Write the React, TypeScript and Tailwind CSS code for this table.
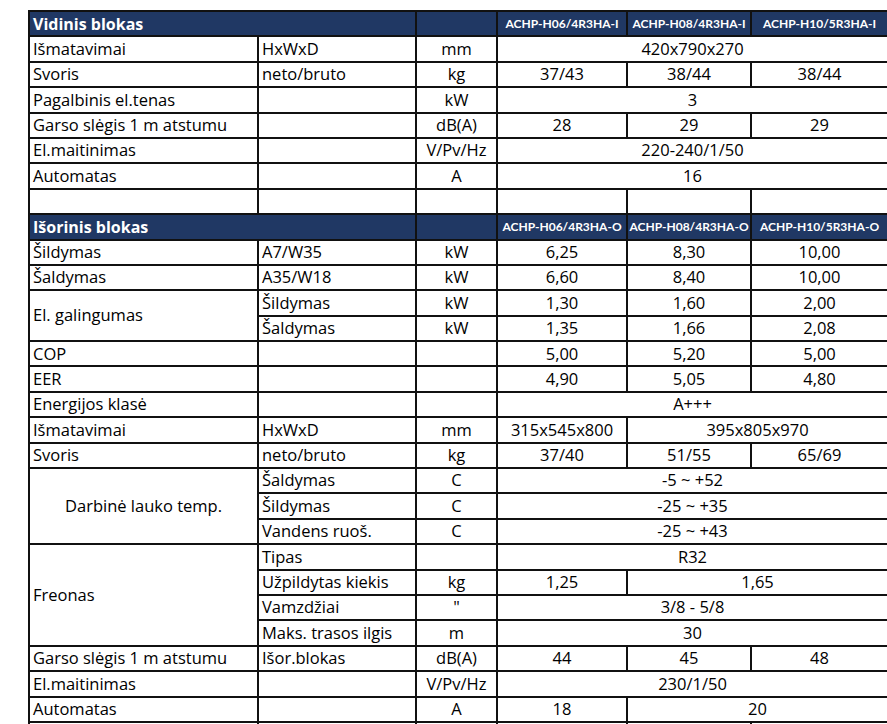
import React from "react";

const B = "border-2 border-[#111] p-0 align-middle whitespace-nowrap";
const L = `${B} pl-[3px] text-left`;
const C = `${B} text-center`;
const H = `${B} bg-[#203864] text-white font-bold`;
const M = `${H} text-center text-[12px] font-['Lato',sans-serif]`;

function Tr({ children }: { children: React.ReactNode }) {
  return <tr className="h-[25.4px]">{children}</tr>;
}

export default function App() {
  return (
    <div className="min-h-screen bg-white pt-[10px] pl-[28px] overflow-hidden">
      <table className="border-collapse table-fixed w-[859px] text-[16.5px] leading-none text-black font-['Open_Sans','Liberation_Sans',sans-serif]">
        <colgroup>
          <col className="w-[229px]" />
          <col className="w-[158px]" />
          <col className="w-[81px]" />
          <col className="w-[130px]" />
          <col className="w-[124px]" />
          <col className="w-[137px]" />
        </colgroup>
        <tbody>
          <Tr>
            <td colSpan={2} className={`${H} pl-[3px] text-left text-[16px]`}>Vidinis blokas</td>
            <td className={H}></td>
            <td className={M}>ACHP-H06/4R3HA-I</td>
            <td className={M}>ACHP-H08/4R3HA-I</td>
            <td className={M}>ACHP-H10/5R3HA-I</td>
          </Tr>
          <Tr>
            <td className={L}>Išmatavimai</td>
            <td className={L}>HxWxD</td>
            <td className={C}>mm</td>
            <td colSpan={3} className={C}>420x790x270</td>
          </Tr>
          <Tr>
            <td className={L}>Svoris</td>
            <td className={L}>neto/bruto</td>
            <td className={C}>kg</td>
            <td className={C}>37/43</td>
            <td className={C}>38/44</td>
            <td className={C}>38/44</td>
          </Tr>
          <Tr>
            <td className={L}>Pagalbinis el.tenas</td>
            <td className={L}></td>
            <td className={C}>kW</td>
            <td colSpan={3} className={C}>3</td>
          </Tr>
          <Tr>
            <td className={L}>Garso slėgis 1 m atstumu</td>
            <td className={L}></td>
            <td className={C}>dB(A)</td>
            <td className={C}>28</td>
            <td className={C}>29</td>
            <td className={C}>29</td>
          </Tr>
          <Tr>
            <td className={L}>El.maitinimas</td>
            <td className={L}></td>
            <td className={C}>V/Pv/Hz</td>
            <td colSpan={3} className={C}>220-240/1/50</td>
          </Tr>
          <Tr>
            <td className={L}>Automatas</td>
            <td className={L}></td>
            <td className={C}>A</td>
            <td colSpan={3} className={C}>16</td>
          </Tr>
          <Tr>
            <td className={L}></td>
            <td className={L}></td>
            <td className={C}></td>
            <td className={C}></td>
            <td className={C}></td>
            <td className={C}></td>
          </Tr>
          <Tr>
            <td colSpan={2} className={`${H} pl-[3px] text-left text-[16px]`}>Išorinis blokas</td>
            <td className={H}></td>
            <td className={M}>ACHP-H06/4R3HA-O</td>
            <td className={M}>ACHP-H08/4R3HA-O</td>
            <td className={M}>ACHP-H10/5R3HA-O</td>
          </Tr>
          <Tr>
            <td className={L}>Šildymas</td>
            <td className={L}>A7/W35</td>
            <td className={C}>kW</td>
            <td className={C}>6,25</td>
            <td className={C}>8,30</td>
            <td className={C}>10,00</td>
          </Tr>
          <Tr>
            <td className={L}>Šaldymas</td>
            <td className={L}>A35/W18</td>
            <td className={C}>kW</td>
            <td className={C}>6,60</td>
            <td className={C}>8,40</td>
            <td className={C}>10,00</td>
          </Tr>
          <Tr>
            <td rowSpan={2} className={L}>El. galingumas</td>
            <td className={L}>Šildymas</td>
            <td className={C}>kW</td>
            <td className={C}>1,30</td>
            <td className={C}>1,60</td>
            <td className={C}>2,00</td>
          </Tr>
          <Tr>
            <td className={L}>Šaldymas</td>
            <td className={C}>kW</td>
            <td className={C}>1,35</td>
            <td className={C}>1,66</td>
            <td className={C}>2,08</td>
          </Tr>
          <Tr>
            <td className={L}>COP</td>
            <td className={L}></td>
            <td className={C}></td>
            <td className={C}>5,00</td>
            <td className={C}>5,20</td>
            <td className={C}>5,00</td>
          </Tr>
          <Tr>
            <td className={L}>EER</td>
            <td className={L}></td>
            <td className={C}></td>
            <td className={C}>4,90</td>
            <td className={C}>5,05</td>
            <td className={C}>4,80</td>
          </Tr>
          <Tr>
            <td className={L}>Energijos klasė</td>
            <td className={L}></td>
            <td className={C}></td>
            <td colSpan={3} className={C}>A+++</td>
          </Tr>
          <Tr>
            <td className={L}>Išmatavimai</td>
            <td className={L}>HxWxD</td>
            <td className={C}>mm</td>
            <td className={C}>315x545x800</td>
            <td colSpan={2} className={C}>395x805x970</td>
          </Tr>
          <Tr>
            <td className={L}>Svoris</td>
            <td className={L}>neto/bruto</td>
            <td className={C}>kg</td>
            <td className={C}>37/40</td>
            <td className={C}>51/55</td>
            <td className={C}>65/69</td>
          </Tr>
          <Tr>
            <td rowSpan={3} className={C}>Darbinė lauko temp.</td>
            <td className={L}>Šaldymas</td>
            <td className={C}>C</td>
            <td colSpan={3} className={C}>-5 ~ +52</td>
          </Tr>
          <Tr>
            <td className={L}>Šildymas</td>
            <td className={C}>C</td>
            <td colSpan={3} className={C}>-25 ~ +35</td>
          </Tr>
          <Tr>
            <td className={L}>Vandens ruoš.</td>
            <td className={C}>C</td>
            <td colSpan={3} className={C}>-25 ~ +43</td>
          </Tr>
          <Tr>
            <td rowSpan={4} className={L}>Freonas</td>
            <td className={L}>Tipas</td>
            <td className={C}></td>
            <td colSpan={3} className={C}>R32</td>
          </Tr>
          <Tr>
            <td className={L}>Užpildytas kiekis</td>
            <td className={C}>kg</td>
            <td className={C}>1,25</td>
            <td colSpan={2} className={C}>1,65</td>
          </Tr>
          <Tr>
            <td className={L}>Vamzdžiai</td>
            <td className={C}>"</td>
            <td colSpan={3} className={C}>3/8 - 5/8</td>
          </Tr>
          <Tr>
            <td className={L}>Maks. trasos ilgis</td>
            <td className={C}>m</td>
            <td colSpan={3} className={C}>30</td>
          </Tr>
          <Tr>
            <td className={L}>Garso slėgis 1 m atstumu</td>
            <td className={L}>Išor.blokas</td>
            <td className={C}>dB(A)</td>
            <td className={C}>44</td>
            <td className={C}>45</td>
            <td className={C}>48</td>
          </Tr>
          <Tr>
            <td className={L}>El.maitinimas</td>
            <td className={L}></td>
            <td className={C}>V/Pv/Hz</td>
            <td colSpan={3} className={C}>230/1/50</td>
          </Tr>
          <Tr>
            <td className={L}>Automatas</td>
            <td className={L}></td>
            <td className={C}>A</td>
            <td className={C}>18</td>
            <td colSpan={2} className={C}>20</td>
          </Tr>
          <Tr>
            <td className={L}></td>
            <td className={L}></td>
            <td className={C}></td>
            <td className={C}></td>
            <td className={C}></td>
            <td className={C}></td>
          </Tr>
        </tbody>
      </table>
    </div>
  );
}
